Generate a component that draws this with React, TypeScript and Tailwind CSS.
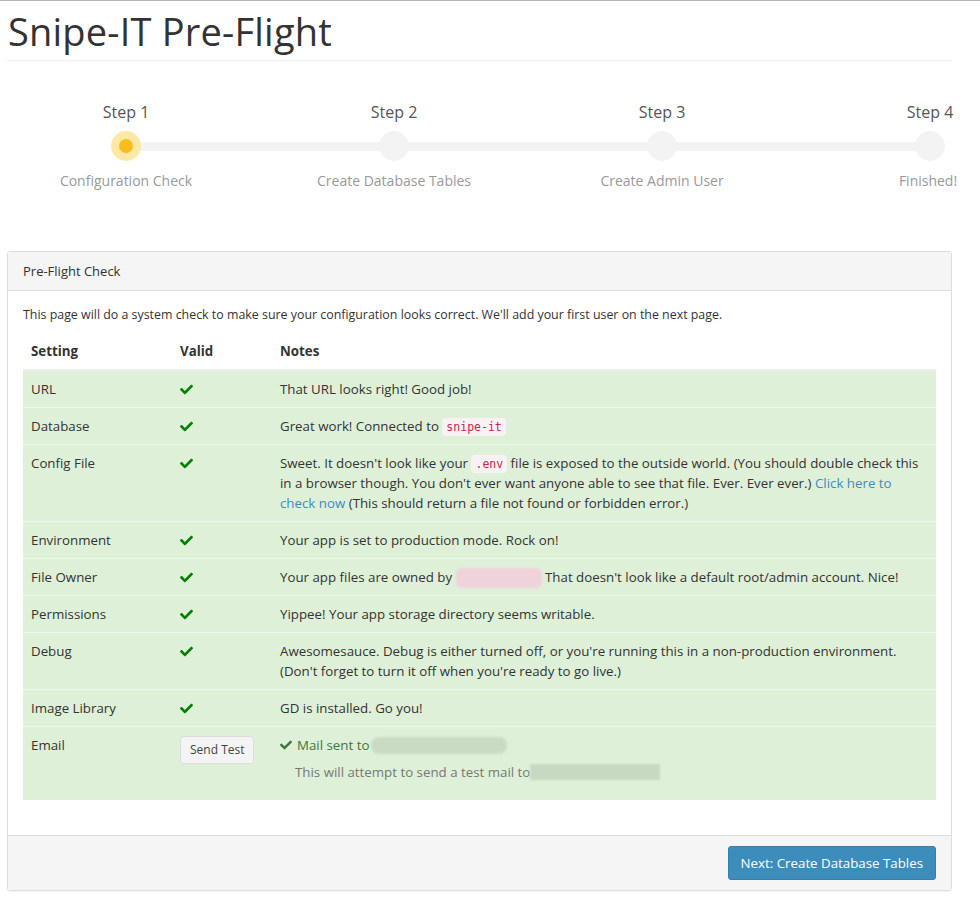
import React from "react";

const font = { fontFamily: '"Open Sans", "Noto Sans", sans-serif' };

function Check({ className = "" }: { className?: string }) {
  return (
    <svg viewBox="0 0 512 512" className={className} fill="currentColor">
      <path d="M173.898 439.404l-166.4-166.4c-9.997-9.997-9.997-26.206 0-36.204l36.203-36.204c9.997-9.998 26.207-9.998 36.204 0L192 312.69 432.095 72.596c9.997-9.997 26.207-9.997 36.204 0l36.203 36.204c9.997 9.997 9.997 26.206 0 36.204l-294.4 294.401c-9.998 9.997-26.207 9.997-36.204-.001z" />
    </svg>
  );
}

function Code({ children }: { children: React.ReactNode }) {
  return (
    <code className="rounded-[4px] bg-[#f9f2f4] px-[4px] py-[2px] text-[11.5px] leading-[12px] text-[#c7254e]" style={{ fontFamily: '"DejaVu Sans Mono", monospace' }}>
      {children}
    </code>
  );
}

const steps = [
  { n: "Step 1", label: "Configuration Check", active: true },
  { n: "Step 2", label: "Create Database Tables" },
  { n: "Step 3", label: "Create Admin User" },
  { n: "Step 4", label: "Finished!" },
];

type Row = { setting: string; notes: React.ReactNode };

const rows: Row[] = [
  { setting: "URL", notes: "That URL looks right! Good job!" },
  { setting: "Database", notes: <>Great work! Connected to <Code>snipe-it</Code></> },
  {
    setting: "Config File",
    notes: (
      <>
        Sweet. It doesn't look like your <Code>.env</Code> file is exposed to the outside world. (You should double check this in a browser though. You don't ever want anyone able to see that file. Ever. Ever ever.){" "}
        <a className="text-[#3c8dbc]">Click here to check now</a> (This should return a file not found or forbidden error.)
      </>
    ),
  },
  { setting: "Environment", notes: "Your app is set to production mode. Rock on!" },
  {
    setting: "File Owner",
    notes: (
      <>
        Your app files are owned by{" "}
        <span className="-my-[4px] inline-block h-[20px] w-[86px] rounded-[6px] bg-[#f0d3da] align-middle blur-[1px]" />{" "}
        That doesn't look like a default root/admin account. Nice!
      </>
    ),
  },
  { setting: "Permissions", notes: "Yippee! Your app storage directory seems writable." },
  {
    setting: "Debug",
    notes: "Awesomesauce. Debug is either turned off, or you're running this in a non-production environment. (Don't forget to turn it off when you're ready to go live.)",
  },
  { setting: "Image Library", notes: "GD is installed. Go you!" },
];

export default function App() {
  return (
    <div className="min-h-[917px] overflow-hidden border-t border-[#b5b5b5] bg-white text-[#333]" style={font}>
      <div className="pl-[7px] pr-[29px]">
        <h1 className="pl-[1px] pt-[8px] text-[38px] leading-[44px] font-normal tracking-[0.2px] text-[#333]">Snipe-IT Pre-Flight</h1>
        <div className="mt-[7px] border-t border-[#eee]" />

        {/* Stepper */}
        <div className="relative mt-[40px] h-[100px]">
          <div className="absolute left-[119px] w-[804px] top-[41px] h-[9px] bg-[#f3f3f3]" />
          <div className="relative flex gap-[266px] pl-[118px]">
            {steps.map((s, i) => (
              <div key={i} className="flex w-[2px] flex-col items-center whitespace-nowrap">
                <div className="text-[16px] leading-[22px] text-[#555]">{s.n}</div>
                <div className={`mt-[8px] flex h-[30px] w-[30px] shrink-0 items-center justify-center rounded-full ${s.active ? "bg-[#fde8a6]" : "bg-[#f3f3f3]"}`}>
                  {s.active && <div className="h-[14px] w-[14px] rounded-full bg-[#fbbd1c]" />}
                </div>
                <div className={`mt-[10px] text-[14px] leading-[20px] text-[#999] ${i === 3 ? "mr-[4px]" : ""}`}>{s.label}</div>
              </div>
            ))}
          </div>
        </div>

        {/* Panel */}
        <div className="mt-[50px] mr-[-1px] rounded-[3px] border border-[#ddd] shadow-[0_1px_1px_rgba(0,0,0,0.05)]">
          <div className="border-b border-[#ddd] bg-[#f5f5f5] px-[15px] py-[10px] text-[13px] leading-[18px]">Pre-Flight Check</div>
          <div className="px-[15px] pb-[35px] pt-[14px] text-[13.3px] leading-[20px]">
            <p className="mb-[8px] text-[12.4px]">This page will do a system check to make sure your configuration looks correct. We'll add your first user on the next page.</p>
            <div className="grid grid-cols-[149px_100px_1fr]">
              <div className="px-[8px] py-[8px] font-bold">Setting</div>
              <div className="px-[8px] py-[8px] font-bold">Valid</div>
              <div className="px-[8px] py-[8px] font-bold">Notes</div>
            </div>
            <div className="border-t-2 border-[#eee]">
              {rows.map((r, i) => (
                <div key={i} className={`grid grid-cols-[149px_100px_1fr] bg-[#dff0d8] ${i > 0 ? "border-t border-[#f1f7ee]" : ""}`}>
                  <div className="px-[8px] py-[8px]">{r.setting}</div>
                  <div className="px-[8px] py-[8px]">
                    <Check className="mt-[4px] h-[13px] w-[13px] text-[#008000]" />
                  </div>
                  <div className="px-[8px] py-[8px]">{r.notes}</div>
                </div>
              ))}
              <div className="grid grid-cols-[149px_100px_1fr] border-t border-[#f1f7ee] bg-[#dff0d8] pb-[10px]">
                <div className="px-[8px] py-[8px]">Email</div>
                <div className="px-[8px] pt-[9px]">
                  <button className="rounded-[3px] border border-[#ddd] bg-[#f4f4f4] px-[9px] py-[4px] text-[12px] leading-[18px] text-[#444]">Send Test</button>
                </div>
                <div className="px-[8px] py-[8px]">
                  <div className="flex items-center text-[#3c763d]">
                    <Check className="mr-[5px] h-[12px] w-[12px]" />
                    <span>Mail sent to</span>
                    <span className="ml-[2px] inline-block h-[17px] w-[136px] rounded-[8px] bg-[#c9dcc3] blur-[1px]" />
                  </div>
                  <div className="mt-[7px] flex items-center pl-[15px] text-[#777]">
                    <span>This will attempt to send a test mail to</span>
                    <span className="inline-block h-[16px] w-[130px] bg-[#c7d9c1] blur-[1px]" />
                  </div>
                </div>
              </div>
            </div>
          </div>
          <div className="flex justify-end border-t border-[#ddd] bg-[#f5f5f5] px-[15px] py-[10px]">
            <button className="rounded-[3px] border border-[#367fa9] bg-[#3c8dbc] px-[12px] py-[6px] text-[13.3px] leading-[20px] text-white">Next: Create Database Tables</button>
          </div>
        </div>
      </div>
    </div>
  );
}
